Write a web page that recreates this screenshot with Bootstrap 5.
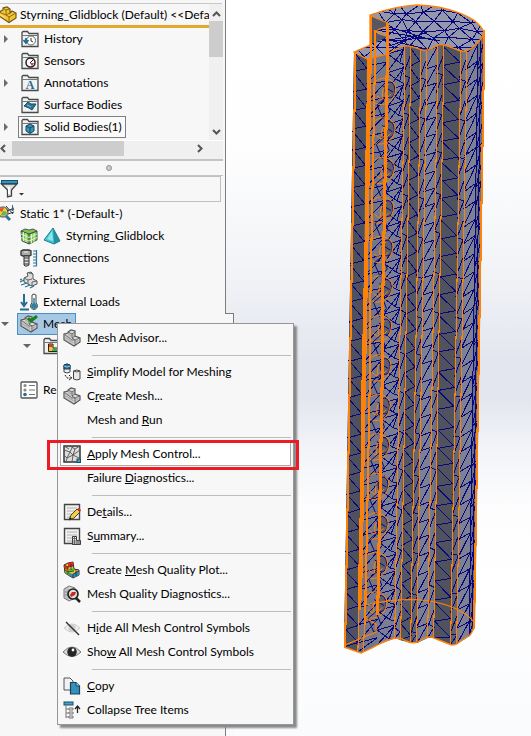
<!DOCTYPE html>
<html lang="en">
<head>
<meta charset="utf-8">
<meta name="viewport" content="width=device-width, initial-scale=1">
<title>Styrning_Glidblock - Static 1</title>
<link href="https://cdn.jsdelivr.net/npm/bootstrap@5.3.0/dist/css/bootstrap.min.css" rel="stylesheet">
<style>
body{font-family:Lato,"Open Sans",sans-serif;font-size:12px;line-height:16px;color:#000;background:#fff}
.side{flex:0 0 226px;min-width:0;background:#f7f7f7;border-right:1px solid #7d7d7d}
.side-top{height:4px;border-bottom:1px solid #c8c8c8;margin-right:3px}
.feature{margin-right:2px;height:136px}
.feature-list{min-width:0}
.root-row{height:24px;border-bottom:3px solid #e2a92c}
.root-row svg{margin-right:3px}
.tree-row{height:22px;padding-left:21px;gap:5px;position:relative}
.static-row{padding-left:20px}
.tree-row svg,.root-row svg,.menu-row svg{flex:none}
.ico{width:18px;height:18px}
.plain{border:0;background:none;padding:0;color:inherit;text-align:left}
.tog{position:absolute;left:0;width:12px;height:12px;line-height:0}
.tog.deep{left:22px}
.sub-row{padding-left:43px}
.tree-label{color:#000;text-decoration:none;white-space:nowrap}
.boxed{border:1px solid #808080;height:22px;margin-left:-3px;padding:0 3px 0 2px;gap:5px;background:#fafafa}
.picked{background:#a6c8e4;border:1px solid #4b8fc4;height:22px;margin-left:-3px;padding:0 2px;gap:5px;width:59px}
.vbar{flex:0 0 14px;background:#f0f0f0;padding:2px 0}
.vthumb{height:36px;background:#cdcdcd}
.hbar{height:19px;background:#f0f0f0;border-top:1px solid #fff;margin-right:2px}
.hthumb{width:112px;height:15px;background:#cdcdcd}
.arrow{width:12px;height:15px;line-height:0}
.splitter{height:17px;border-top:2px solid #c4c4c4;border-bottom:1px solid #c4c4c4;margin-right:2px;padding-right:6px}
.knob{width:6px;height:6px;border:1px solid #909090;border-radius:50%;background:#ccc}
.filter{height:26px;border:1px solid #c0c0c0;border-left:0;margin-right:4px}
.filter input{border:0;background:none;min-width:0;outline:0}
.spacer-row{height:22px}
.study-tree{padding-top:1px}
.study-row{height:22px}
.view{min-width:0;background:linear-gradient(#fff 0,#fefefe 20%,#f2f4f7 36%,#e3e6ef 49%,#e3e6ef 54%,#f2f4f8 61%,#fdfdfe 69%,#fff 80%,#fafbfd 100%)}
.view svg{width:305px;height:736px;max-width:none}
.tab-edge{position:absolute;left:225px;top:313px;width:9px;height:423px;background:#f7f7f7;border:1px solid #7d7d7d;border-left:0;border-bottom:0}
.tab-cut{position:absolute;left:225px;top:724px;width:9px;height:12px;background:#fafafc;border-left:1px solid #7d7d7d}
.ctx{position:absolute;left:57px;top:323px;width:237px;background:#f7f7f7;border:1px solid #979797;padding:2px;box-shadow:3px 3px 2px #888}
.menu-row{height:24px;width:100%;padding:0 2px;gap:6px;white-space:nowrap;position:relative;border:1px solid transparent}
.menu-row.hot{border-color:#aaa;background:#fff}
.menu-row .none{width:18px}
.rule{height:10px;padding:5px 0 0 32px}
.rule hr{margin:0;border-top:1px solid #bdbdbd;opacity:1}
.callout{position:absolute;left:-14px;top:-3px;right:-9px;height:30px;border:3px solid #ed1c24;pointer-events:none}
</style>
<script src="https://cdn.jsdelivr.net/npm/bootstrap@5.3.0/dist/js/bootstrap.bundle.min.js"></script>
</head>
<body>
<svg class="d-none" xmlns="http://www.w3.org/2000/svg">
<defs>
<symbol id="folder" viewBox="0 0 18 18"><path d="M1 16.5V2.5L2 1.5H6.500L8 3.500H17V16.5Z" fill="#f0f2f3" stroke="#4a4a4a" stroke-width="1.300"/><path d="M1 5.500H17" stroke="#777"/></symbol>
<symbol id="cubes" viewBox="0 0 18 18"><path d="M1 5L5 4V3L8 1L12 2V7L17 9V13L11 17L1 11Z" fill="#dcdcdc" stroke="#555" stroke-width="1.200"/><path d="M5 3L9 5V9L12 7M9 5L12 3M9 9L12 11L17 9M12 11V17M1 5L9 11L12 11" stroke="#666" fill="none"/><path d="M3 6V12M5 6V13M7 4V14M9 10V16M11 4V8M14 10V15M1 8L11 14L17 11M5 5L9 7L12 5" stroke="#909090" stroke-width=".6" fill="none"/></symbol>
<symbol id="sheet" viewBox="0 0 18 18"><path d="M1.500 1.500H16.500V16.500H1.500Z" fill="#f1f1f1" stroke="#444" stroke-width="1.400"/><path d="M4 5H14M4 8H14M4 11H14M4 14H10" stroke="#b0b0b0"/></symbol>
<symbol id="right" viewBox="0 0 12 12"><path d="M4 2L8 6L4 10Z" fill="#6b6b6b"/></symbol>
<symbol id="down" viewBox="0 0 12 12"><path d="M1 4H9L5 8Z" fill="#666"/></symbol>
</defs>
</svg>
<div class="position-relative d-flex min-vh-100 overflow-hidden">
<aside class="side d-flex flex-column">
  <div class="side-top"></div>
  <section class="feature d-flex">
    <div class="feature-list flex-grow-1 overflow-hidden">
      <div class="root-row d-flex align-items-center"><svg width="17" height="18" viewBox="0 0 17 18"><path d="M-1 6L3 4V2L7 1L10 3V7L12 5L16 7V12L9 16.500L-1 10Z" fill="#f3c52e" stroke="#70551a" stroke-width="1.200"/><path d="M3 2L6 4V9L9 11L16 7M6 4L10 3M6 9L10 7M9 11V16M-1 6L6 9" fill="none" stroke="#8d6b1c"/><path d="M0 8L5 11V12L0 9Z" fill="#ffe582"/></svg><a href="#" class="tree-label">Styrning_Glidblock (Default) &lt;&lt;Defa</a></div>
      <div class="tree-row d-flex align-items-center"><button class="plain tog" aria-label="Expand History"><svg width="12" height="12"><use href="#right"/></svg></button><svg class="ico" viewBox="0 0 18 18"><use href="#folder"/><circle cx="10" cy="10.500" r="4.500" fill="#fff" stroke="#666"/><path d="M10 8V11L12 12" fill="none" stroke="#333"/><path d="M5 8V13M2.500 10L5 13L7.500 10" fill="none" stroke="#1d6d99" stroke-width="1.800"/></svg><a href="#" class="tree-label">History</a></div>
      <div class="tree-row d-flex align-items-center"><svg class="ico" viewBox="0 0 18 18"><use href="#folder"/><circle cx="9.500" cy="10.500" r="4.500" fill="#fff" stroke="#222" stroke-width="1.500"/><path d="M9 11L13 7" stroke="#222"/><path d="M9 11H13L11 14Z" fill="#e13a22"/></svg><a href="#" class="tree-label">Sensors</a></div>
      <div class="tree-row d-flex align-items-center"><button class="plain tog" aria-label="Expand Annotations"><svg width="12" height="12"><use href="#right"/></svg></button><svg class="ico" viewBox="0 0 18 18"><use href="#folder"/><text x="9" y="15" text-anchor="middle" font-family="Liberation Serif" font-size="12" font-weight="bold" fill="#286990">A</text></svg><a href="#" class="tree-label">Annotations</a></div>
      <div class="tree-row d-flex align-items-center"><svg class="ico" viewBox="0 0 18 18"><use href="#folder"/><path d="M3 10L7 6L10 8L15 8L11 14L8 12Z" fill="#2e7594" stroke="#164c6b"/><path d="M6 9L10 11" stroke="#8abfd2"/></svg><a href="#" class="tree-label">Surface Bodies</a></div>
      <div class="tree-row d-flex align-items-center"><button class="plain tog" aria-label="Expand Solid Bodies"><svg width="12" height="12"><use href="#right"/></svg></button><span class="boxed d-flex align-items-center"><svg class="ico" viewBox="0 0 18 18"><use href="#folder"/><path d="M5 8L9 6L13 8V13L9 15.500L5 13Z" fill="#3c8fb5" stroke="#124a69"/><path d="M5 8L9 10L13 8M9 10V15" fill="none" stroke="#124a69"/></svg><a href="#" class="tree-label">Solid Bodies(1)</a></span></div>
    </div>
    <div class="vbar d-flex flex-column justify-content-between">
      <div><button class="plain arrow d-block mx-auto" aria-label="Scroll up"><svg width="12" height="12"><path d="M3 8L6.500 4.500L10 8" fill="none" stroke="#555" stroke-width="2"/></svg></button><div class="vthumb"></div></div>
      <button class="plain arrow d-block mx-auto" aria-label="Scroll down"><svg width="12" height="12"><path d="M3 5L6.500 8.500L10 5" fill="none" stroke="#555" stroke-width="2"/></svg></button>
    </div>
  </section>
  <div class="hbar d-flex align-items-start"><button class="plain arrow" aria-label="Scroll left"><svg width="12" height="15"><path d="M5 4L1.500 7.500L5 11" fill="none" stroke="#555" stroke-width="2"/></svg></button><div class="hthumb"></div><button class="plain arrow ms-auto me-3" aria-label="Scroll right"><svg width="12" height="15"><path d="M3 4L6.500 7.500L3 11" fill="none" stroke="#555" stroke-width="2"/></svg></button></div>
  <div class="splitter d-flex align-items-center justify-content-center"><span class="knob"></span></div>
  <div class="filter d-flex align-items-center"><button class="plain" aria-label="Filter"><svg width="26" height="20" viewBox="0 0 26 20"><path d="M1.500 5L7.500 11V18L11.500 17V11L17 5Z" fill="#ddd" stroke="#444" stroke-width="1.300"/><path d="M9 8V15" stroke="#fff" stroke-width="2"/><rect x="1.500" y="1.500" width="16" height="3" fill="#3494b8" stroke="#164e6b"/><path d="M19 14H24L21.500 16.500Z" fill="#333"/></svg></button><input class="flex-grow-1" type="text" aria-label="Filter tree"></div>
  <div class="study-tree">
    <div class="study-row d-flex align-items-center"><svg width="16" height="20" viewBox="0 0 16 20" class="me-1"><circle cx="3" cy="8" r="5" fill="#f2d42e" stroke="#777" stroke-width="1.500"/><path d="M-1 6A5 5 0 0 1 4 4L2 8Z" fill="#e94c2d"/><path d="M1 11L3 7L7 8A4 4 0 0 1 1 11" fill="#58b86b"/><path d="M6 12L10 16" stroke="#2f7494" stroke-width="3"/><path d="M6 2L13 10M7 7L14 4M8 10L14 8" stroke="#333"/><path d="M12.500 1V7M11 5L12.500 7L14 5" stroke="#28698b" fill="none"/></svg><a href="#" class="tree-label">Static 1* (-Default-)</a></div>
    <div class="tree-row static-row d-flex align-items-center"><svg class="ico" viewBox="0 0 18 18"><path d="M1 4L5 2L9 3L13 2L17 4V13L9 17L2 14Z" fill="#7ac850" stroke="#555"/><path d="M1 4L9 7L17 4M9 7V17" stroke="#444" fill="none"/><path d="M3.500 5V14M6 6V15M11.500 7V16M14 6V15M1 7L9 10.500L17 7M1 10.500L9 14L17 10.500" fill="none" stroke="#effae6" stroke-width=".8"/></svg><svg class="ico" viewBox="0 0 18 18"><path d="M10 1L17 14L11 17L1 13Z" fill="#3fc8d3" stroke="#247789"/><path d="M10 1L11 17L17 14Z" fill="#2790a0"/><path d="M9 4L4 12L10 14Z" fill="#8be9eb"/></svg><a href="#" class="tree-label">Styrning_Glidblock</a></div>
    <div class="tree-row static-row d-flex align-items-center"><svg class="ico" viewBox="0 0 18 18"><path d="M1 2L3 1H9L11 2V6L9 7H3L1 6Z" fill="#aaa" stroke="#333" stroke-width="1.300"/><path d="M4 7H9V16L7 17H5L4 16Z" fill="#ddd" stroke="#333"/><path d="M4 9H9M4 12H9M4 15H9" stroke="#333"/><path d="M4 3H8" stroke="#eee"/><path d="M16.500 1V17M13 2H17M13 5H17M13 8H17M13 11H17M13 14H17M13 17H17" stroke="#2c789c" stroke-width="1.200"/></svg><a href="#" class="tree-label">Connections</a></div>
    <div class="tree-row static-row d-flex align-items-center"><svg class="ico" viewBox="0 0 18 18"><path d="M4 7L8 5L7 2L11 1L13 3V8L17 10V13L12 15L4 11Z" fill="#ddd" stroke="#555"/><path d="M4 7L8 9L12 8M8 9V13M12 15V11L17 10M9 2L13 3" fill="none" stroke="#666"/><path d="M0 11L4 9M1 14L7 12M5 16L10 14M2 8L0 9M10 17L14 15" stroke="#28749b" stroke-width="1.300"/></svg><a href="#" class="tree-label">Fixtures</a></div>
    <div class="tree-row static-row d-flex align-items-center"><svg class="ico" viewBox="0 0 18 18"><path d="M4 1V13M1 9L4 13L7 9M0 16.500H9" fill="none" stroke="#276d93" stroke-width="2"/><path d="M12 2Q14 0 16 2V10A3.500 3.500 0 1 1 12 10Z" fill="#fff" stroke="#444"/><circle cx="14" cy="13" r="3" fill="#32809f"/><path d="M14 5V12" stroke="#32809f" stroke-width="1.500"/></svg><a href="#" class="tree-label">External Loads</a></div>
    <div class="tree-row static-row d-flex align-items-center"><button class="plain tog" aria-label="Collapse Mesh"><svg width="12" height="12"><use href="#down"/></svg></button><span class="picked d-flex align-items-center"><svg class="ico" viewBox="0 0 18 18"><use href="#cubes"/><path d="M8 3L11 6L17 1" fill="none" stroke="#14831e" stroke-width="3"/></svg><a href="#" class="tree-label">Mesh</a></span></div>
    <div class="tree-row sub-row d-flex align-items-center"><button class="plain tog deep" aria-label="Collapse Mesh plots"><svg width="12" height="12"><use href="#down"/></svg></button><svg class="ico" viewBox="0 0 18 18"><use href="#folder"/><path d="M5.500 7V14.500H15V11H10V7Z" fill="#f3c52e" stroke="#222"/><path d="M6 7.500H9V10H6Z" fill="#de3626"/><path d="M10 11.500H14V14H9Z" fill="#34aa48"/></svg></div>
    <div class="spacer-row"></div>
    <div class="tree-row static-row d-flex align-items-center"><svg class="ico" viewBox="0 0 18 18"><rect x="1" y="1" width="16" height="16" rx="1" fill="#fff" stroke="#555" stroke-width="1.300"/><circle cx="5" cy="4.500" r="1.600" fill="#888"/><circle cx="5" cy="9" r="1.600" fill="#888"/><circle cx="5" cy="13.500" r="1.800" fill="#286d91"/><path d="M9 4.500H15M9 9H15M9 13.500H15" stroke="#777"/></svg><a href="#" class="tree-label">Results</a></div>
  </div>
</aside>
<main class="view flex-grow-1 overflow-hidden"><svg id="model" viewBox="226 0 305 736" role="img" aria-label="Meshed model"></svg></main>
<div class="tab-edge"></div><div class="tab-cut"></div>
<nav class="ctx" aria-label="Mesh menu">
  <button class="plain menu-row d-flex align-items-center"><svg class="ico"><use href="#cubes"/></svg><span><u>M</u>esh Advisor...</span></button>
  <div class="rule"><hr></div>
  <button class="plain menu-row d-flex align-items-center"><svg class="ico" viewBox="0 0 18 18"><path d="M1 2Q4 0 7 2V9Q4 11 1 9Z" fill="#eee" stroke="#444"/><path d="M1 2Q4 0 7 2V6H1Z" fill="#2a7698" stroke="#143f59"/><path d="M1 3Q4 5 7 3" stroke="#91c4d7" fill="none"/><path d="M10.500 8Q14 6 17 8V16Q14 18 10.500 16Z" fill="#e8e8e8" stroke="#444"/><path d="M10.500 8Q14 10 17 8" fill="none" stroke="#555"/><path d="M2 12L4 15H8M6 12L9 15L6 17" fill="none" stroke="#222" stroke-dasharray="2 1"/></svg><span><u>S</u>implify Model for Meshing</span></button>
  <button class="plain menu-row d-flex align-items-center"><svg class="ico"><use href="#cubes"/></svg><span>C<u>r</u>eate Mesh...</span></button>
  <button class="plain menu-row d-flex align-items-center"><span class="none"></span><span>Mesh and <u>R</u>un</span></button>
  <div class="rule"><hr></div>
  <button class="plain menu-row hot d-flex align-items-center"><svg class="ico" viewBox="0 0 18 18"><rect x="1" y="1" width="16" height="16" fill="#ddd" stroke="#333" stroke-width="1.500"/><path d="M1 5L7 7L10 1M7 7L4 13L1 10M4 13L10 10L7 7M10 10L17 5M10 10L16 13M10 10L9 17M4 13L3 17M10 10L12 4L17 1M12 4L7 1M1 1L6 4" fill="none" stroke="#555" stroke-width=".9"/><rect x="14" y="14" width="3.500" height="3.500" fill="#38a0c7" stroke="#154e6c"/></svg><span><u>A</u>pply Mesh Control...</span><span class="callout"></span></button>
  <button class="plain menu-row d-flex align-items-center"><span class="none"></span><span>Failure <u>D</u>iagnostics...</span></button>
  <div class="rule"><hr></div>
  <button class="plain menu-row d-flex align-items-center"><svg class="ico" viewBox="0 0 18 18"><use href="#sheet"/><path d="M6 17L8 12L14 6L17 9L11 15Z" fill="#f1cd4a" stroke="#4c4227"/><path d="M14 6L16 5L18 7L17 9Z" fill="#d92828"/><path d="M6 17L7 14L9 16Z" fill="#222"/></svg><span>De<u>t</u>ails...</span></button>
  <button class="plain menu-row d-flex align-items-center"><svg class="ico" viewBox="0 0 18 18"><use href="#sheet"/><path d="M9.500 9.500H13.500V13.500H17.500V17.500H9.500Z" fill="#eee" stroke="#333"/><path d="M11.500 9V18M14 13V18M16 13V18M9 11.500H13M9 14H18M9 16H18" stroke="#555" stroke-width=".8"/></svg><span>S<u>u</u>mmary...</span></button>
  <div class="rule"><hr></div>
  <button class="plain menu-row d-flex align-items-center"><svg class="ico" viewBox="0 0 18 18"><path d="M1 4L5 2L10 1L11 8L16 9V14L10 17L2 12Z" fill="#efc52d" stroke="#422"/><path d="M1 4L5 6V9L2 8ZM5 2L10 1V5L5 6Z" fill="#e32925"/><path d="M2 9L6 11V14L2 12ZM6 8L11 7V10L6 11Z" fill="#5fb62f"/><path d="M6 12L10 13V17L6 14ZM10 13L16 9V14L10 17Z" fill="#2790b8"/><path d="M1 4L5 6L10 5M5 6V13M2 9L6 11L11 10M10 13V17M10 13L16 10M8 3V9M13 9V15" stroke="#222" stroke-width=".7" fill="none"/></svg><span>Create <u>M</u>esh Quality Plot...</span></button>
  <button class="plain menu-row d-flex align-items-center"><svg class="ico" viewBox="0 0 18 18"><path d="M1 4L6 1L12 3V13L6 16L1 13Z" fill="#ddd" stroke="#777"/><path d="M3 3V14M1 7H11M1 10H11M5 2V15" stroke="#888" stroke-width=".7"/><circle cx="10" cy="9" r="5" fill="#ddd" stroke="#222" stroke-width="1.700"/><path d="M7 10L9 7L13 7L12 10L8 12Z" fill="#c92a20"/><path d="M13 13L17 17" stroke="#222" stroke-width="2.500"/></svg><span>Mesh Quality Diagnostics...</span></button>
  <div class="rule"><hr></div>
  <button class="plain menu-row d-flex align-items-center"><svg class="ico" viewBox="0 0 18 18"><path d="M1 9Q9 1 17 9Q9 17 1 9Z" fill="#eee" stroke="#ccc"/><circle cx="9" cy="9" r="3.500" fill="#ccc"/><path d="M3 3L16 16" stroke="#333" stroke-width="1.400"/></svg><span>H<u>i</u>de All Mesh Control Symbols</span></button>
  <button class="plain menu-row d-flex align-items-center"><svg class="ico" viewBox="0 0 18 18"><path d="M0 9Q9 -1 18 9Q9 18 0 9Z" fill="#ddd" stroke="#777"/><circle cx="9" cy="9" r="4.800" fill="#262626"/><circle cx="10" cy="7" r="1.400" fill="#fff"/></svg><span>Sho<u>w</u> All Mesh Control Symbols</span></button>
  <div class="rule"><hr></div>
  <button class="plain menu-row d-flex align-items-center"><svg class="ico" viewBox="0 0 18 18"><path d="M1 1H7L10 4V13H1Z" fill="#f2f2f2" stroke="#555"/><path d="M7.500 5.500H13L16.500 9V17H7.500Z" fill="#388fb7" stroke="#17445c" stroke-width="1.200"/><path d="M13 5.500V9H16.500" fill="#a7d1e1" stroke="#17445c"/></svg><span><u>C</u>opy</span></button>
  <button class="plain menu-row d-flex align-items-center"><svg class="ico" viewBox="0 0 18 18"><rect x="1" y="1" width="9" height="3" fill="#44a1c9" stroke="#174e6a"/><path d="M3 4V17M3 8H6M3 12H6M3 16H6" stroke="#777"/><path d="M6 7H10V9H6ZM6 11H10V13H6ZM6 15H10V17H6Z" fill="#eee" stroke="#777"/><path d="M14.500 12V6M12 8L14.500 5L17 8" stroke="#222" fill="none" stroke-width="1.300"/></svg><span>Collapse Tree Items</span></button>
</nav>
</div>
<script>
(function(){
  const svg = document.getElementById('model');
  const out = [];
  const add = (tag, attrs) => out.push('<' + tag + ' ' + Object.entries(attrs).map(([k,v]) => k + '="' + v + '"').join(' ') + '/>');
  let seed = 11;
  const rnd = () => (seed = (seed * 16807) % 2147483647) / 2147483647;
  const NAVY = '#07077f', ORANGE = '#ff8208';
  const grad = (id, a, b) => '<linearGradient id="' + id + '"><stop stop-color="' + a + '"/><stop offset="1" stop-color="' + b + '"/></linearGradient>';
  out.push('<defs>' + grad('bend','#7f8290','#565964') + grad('rise','#585b67','#787b8b') + '</defs>');

  // Facets of the extrusion: [x top, y top, x bottom, y bottom] for each vertical edge
  const edges = [[354,52,344,647],[367,59,358,652],[388,53,377,645],[404,46,395,638],[410,46,400,640],[420,50,411,643],[426,50,417,643],[437,45,428,637],[443,45,434,638],[460,51,450,645],[466,51,457,644],[478,40,469,636],[484,32,474,628]];
  const fills = ['#4f525e','#747787','#7b7f8f','url(#bend)','#555863','url(#rise)','#7c8090','url(#bend)','#50535e','url(#rise)','#7d8191','#6b6f80'];
  const at = (e, t) => [e[0] + (e[2]-e[0])*t, e[1] + (e[3]-e[1])*t];
  const pt = p => p[0].toFixed(1) + ' ' + p[1].toFixed(1);
  add('path', {d:'M354 52L367 59L388 53L404 46H410L420 50H426L437 45H443L460 51H466L478 40L484 32L474 628L469 636L457 644H450L434 638H428L417 643H411L400 640L395 638L377 645L361 653L344 647Z', fill:'#666a79'});
  for (let i = 0; i < fills.length; i++) {
    const a = edges[i], b = edges[i+1];
    add('path', {d:`M${a[0]} ${a[1]}L${b[0]+1} ${b[1]}L${b[2]+1} ${b[3]}L${a[2]} ${a[3]}Z`, fill:fills[i]});
  }
  // Surface mesh
  let d = '';
  for (let i = 0; i < fills.length; i++) {
    const a = edges[i], b = edges[i+1];
    const zig = i === 0 || i === 4 || i === 8;
    const n = zig ? 31 : (b[0]-a[0] > 9 ? 34 : 30), h = 1/n, k = i % 2 ? .35 : 0;
    for (let j = 0; j < n; j++) {
      const t = Math.min(1, (j + k + rnd()*.15)/n), u = Math.min(1, t+h);
      if (zig) {
        d += 'M' + pt(at(a,t)) + 'L' + pt(at(b,Math.min(1,t+h*.5))) + 'L' + pt(at(a,u));
      } else {
        d += 'M' + pt(at(a,u)) + 'L' + pt(at(b,t+h*.1));
        if (i === 2 || i === 1 || i === 6 || i === 10 || j % 2) d += 'M' + pt(at(a,t)) + 'L' + pt(at(b,Math.min(1,t+h*.1)));
      }
      if (i === 2) {
        const m = at([a[0]+12,a[1],a[2]+12,a[3]], Math.min(1,t+h*.5));
        d += 'M' + pt(at(a,t)) + 'L' + pt(m) + 'L' + pt(at(b,u)) + 'M' + pt(m) + 'L' + pt(at(b,t));
      }
    }
  }
  d += 'M478 42L469 636M481 38L472 632';
  add('path', {d, fill:'none', stroke:NAVY, 'stroke-width':1, 'shape-rendering':'crispEdges'});

  // Top cap
  const cap = 'M370 15C384 10 400 6 417 5C447 6 477 16 484 32C482 40 473 49 466 51Q460 52 455 49Q443 43 437 45Q431 51 422 50Q409 45 404 46Q394 49 388 54L367 59L354 52L370 45Z';
  out.push('<clipPath id="cap"><path d="' + cap + '"/></clipPath>');
  add('path', {d:cap, fill:'#9598ab'});
  let c = '';
  const rows = [];
  for (let r = 0; r < 7; r++) {
    const row = [];
    for (let q = 0; q < 10; q++) row.push([350 + q*17 + (r%2)*8 + (rnd()-.5)*7, 3 + r*9 + (rnd()-.5)*4]);
    rows.push(row);
  }
  for (let r = 0; r < 6; r++) for (let q = 0; q < 9; q++) {
    c += 'M' + pt(rows[r][q]) + 'L' + pt(rows[r][q+1]) + 'L' + pt(rows[r+1][q + (r%2)]) + 'L' + pt(rows[r][q]);
  }
  c += 'M372 36L430 50M376 30L440 41M386 26L425 38M376 42L420 35M384 48L430 31';
  add('path', {d:c, fill:'none', stroke:NAVY, 'stroke-width':1, 'clip-path':'url(#cap)', 'shape-rendering':'crispEdges'});
  add('path', {d:'M371 16L388 23V26L375 30V42L371 44Z', fill:'#555864'});
  add('path', {d:'M375 33L387 37L375 43Z', fill:'#555864'});
  add('path', {d:cap, fill:'none', stroke:ORANGE, 'stroke-width':1.3});
  add('path', {d:'M371 16L388 23M388 26L375 31L387 36', fill:'none', stroke:ORANGE, 'stroke-width':1.3});

  // Holes along the slot
  for (let j = 0; j < 14; j++) {
    const y = 90 + j*39.5, x = 389 - (y-90)*.0175;
    add('ellipse', {cx:x+1, cy:y, rx:5, ry:8, fill:'#5c5f6c', stroke:NAVY});
    add('path', {d:`M${x-13} ${y-9}q7 -5 14 -1q8 4 5 13q-2 9 -10 11q-8 2 -12 -3M${x-6} ${y+9}q-3 -11 6 -15M${x-12} ${y+6}q7 8 14 -2`, fill:'none', stroke:ORANGE});
    add('path', {d:`M${x-12} ${y+15}l8 -7l5 13l-7 8zM${x-6} ${y-4}l10 6`, fill:'none', stroke:NAVY});
  }
  // Edge highlights, drawn as short stepped vertical runs
  function rail(x0,y0,y1,w,step,skip){
    let s = '', n = 0;
    for (let y = y0; y < y1; y += step, n++) {
      if (skip && n % skip === skip-1) continue;
      const x = Math.round(x0 - (y-y0)*.0175) + (w % 2 ? .5 : 0);
      s += `M${x} ${y}V${Math.min(y1,y+step+3)}`;
    }
    add('path', {d:s, stroke:ORANGE, 'stroke-width':w, fill:'none', 'shape-rendering':'crispEdges'});
  }
  rail(355,52,647,2,57); rail(368,58,610,3,46); rail(371,15,600,2,56); rail(375,30,625,2,52); rail(387,23,615,3,52);
  rail(367,200,580,2,44,2); rail(358,600,652,1,45); rail(364,590,652,1,45);
  [[404,47,638],[410,46,640],[420,50,643],[426,50,643],[437,45,637],[443,45,638],[460,51,645],[466,51,644]].forEach(([x,y,e]) => rail(x,y,e,1,57));
  rail(484,30,628,2,57);
  add('path', {d:'M344 647L361 653L372 648Q387 639 396 638Q402 638 406 641Q415 645 421 640Q428 635 434 638L449 644Q454 647 459 642L470 635Q474 631 474 620', fill:'none', stroke:ORANGE, 'stroke-width':1.4});
  add('path', {d:'M366 605Q402 597 430 601Q462 607 474 622M345 645L376 632V624L365 618', fill:'none', stroke:ORANGE, 'stroke-width':1.2});
  add('path', {d:'M293.500 707v2M293.500 713v2', stroke:'#c00'});
  svg.innerHTML = out.join('');
})();
</script>
</body>
</html>
